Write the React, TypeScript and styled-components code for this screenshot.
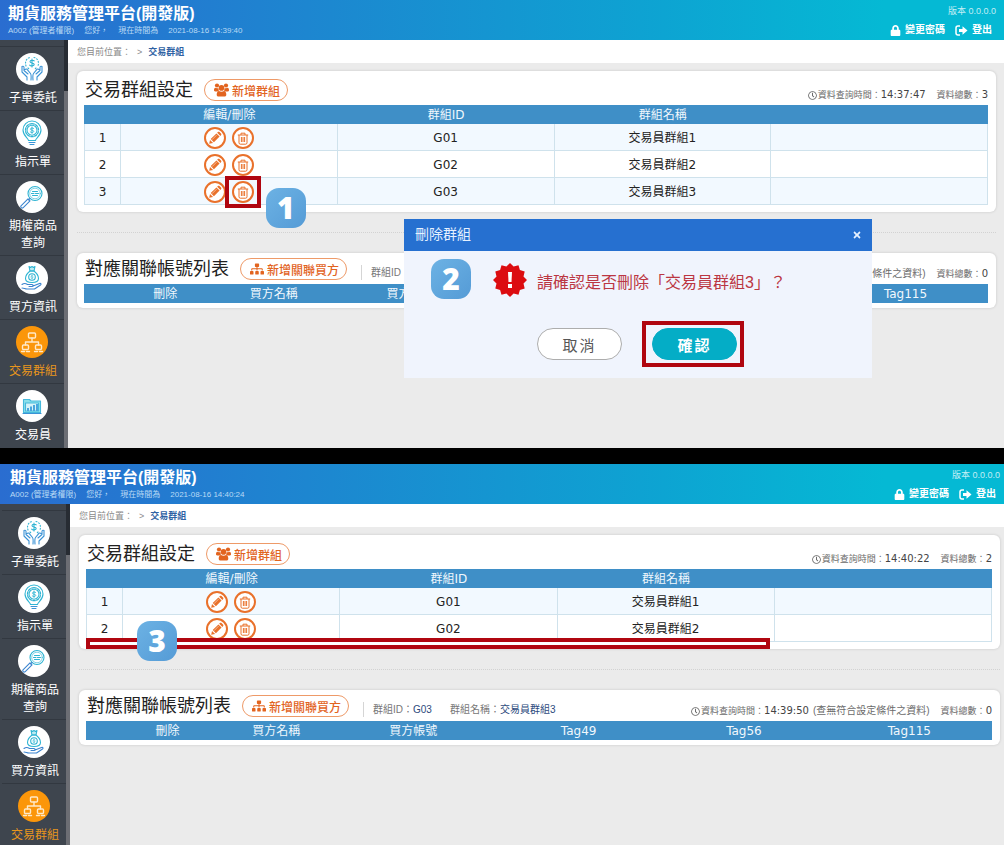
import React from 'react';
import styled, { createGlobalStyle, css } from 'styled-components';
import { FaSitemap, FaLock, FaRegClock, FaTimes } from 'react-icons/fa';

const cjk = '"Noto Sans CJK TC", sans-serif';
const RED = '#b00610';
const ORANGE = '#e9712b';

const GlobalStyle = createGlobalStyle`
  *, *::before, *::after { box-sizing: border-box; }
  body { margin: 0; background: #000; font-family: "Liberation Sans", ${cjk}; }
  button { font-family: inherit; cursor: pointer; padding: 0; }
  h1, h2, h3, p, ul { margin: 0; padding: 0; }
  ul { list-style: none; }
  a { color: inherit; text-decoration: none; }
  svg { display: block; flex: none; }
`;

const Page = styled.div`
  display: flex;
  flex-direction: column;
  gap: 16px;
  min-height: 100vh;
`;

const Screen = styled.section<{ $lead: number; $trail: number; $grow?: boolean }>`
  --lead: ${p => p.$lead}px;
  --trail: ${p => p.$trail}px;
  position: relative;
  display: flex;
  flex-direction: column;
  flex: ${p => (p.$grow ? '1 0 auto' : '0 0 auto')};
  background: #ebebeb;
`;

/* ---------- top bar ---------- */

const TopBar = styled.header`
  display: flex;
  justify-content: space-between;
  height: 40px;
  padding: 4px calc(4px + var(--trail)) 0 calc(8px + var(--lead));
  color: #fff;
  background: linear-gradient(90deg, #2a6dd0 0%, #1c88d0 33%, #0da4d2 66%, #05b9d4 88%, #05b9d4 100%);
`;

const Brand = styled.h1`
  font-size: 16px;
  line-height: 20px;
  font-weight: 700;
`;

const Session = styled.p`
  display: flex;
  gap: 10px;
  font-size: 8px;
  line-height: 14px;
  color: #b9daf5;
  white-space: pre;
`;

const Account = styled.div`
  display: flex;
  flex-direction: column;
  align-items: flex-end;
`;

const Version = styled.span`
  font-size: 9px;
  line-height: 15px;
  color: #c2eef5;
`;

const AccountLinks = styled.nav`
  display: flex;
  gap: 10px;
  padding: 4px 4px 0 0;
`;

const AccountLink = styled.a`
  display: flex;
  align-items: center;
  gap: 4px;
  font-size: 10px;
  line-height: 14px;
  font-weight: 700;
`;

/* ---------- sidebar ---------- */

const Body = styled.div`
  display: flex;
  flex: 1;
`;

const Side = styled.aside`
  display: flex;
  flex: 0 0 calc(68px + var(--lead));
  background: #3e454e;
`;

const Menu = styled.ul<{ $foot: number }>`
  flex: 1;
  padding: 6px 0 ${p => p.$foot}px var(--lead);
`;

const MenuItem = styled.li`
  border-top: 1px solid #323840;
  padding-bottom: 3px;
  &:last-child { padding-bottom: 0; }
`;

const MenuLink = styled.a<{ $active?: boolean }>`
  display: flex;
  flex-direction: column;
  align-items: center;
  gap: 5px;
  padding: 6px 0 0;
  font-size: 12px;
  line-height: 17px;
  text-align: center;
  color: ${p => (p.$active ? '#e8961c' : '#fff')};
`;

const MenuDisc = styled.span<{ $active?: boolean }>`
  display: grid;
  place-items: center;
  width: 32px;
  height: 32px;
  border-radius: 50%;
  background: ${p => (p.$active ? '#fb960a' : '#fff')};
`;

const MenuLabel = styled.span`
  width: 48px;
  margin-left: 2px;
`;

const Rail = styled.div`
  flex: 0 0 4px;
  padding-top: 51px;
  background: #272c33;
`;

const Thumb = styled.div`
  height: 100%;
  background: #6c6e74;
`;

/* ---------- content ---------- */

const Main = styled.main`
  flex: 1;
  min-width: 0;
`;

const Crumbs = styled.nav`
  display: flex;
  align-items: center;
  gap: 6px;
  height: 23px;
  padding-left: 9px;
  font-size: 9px;
  background: #fff;
  color: #8a8a8a;
  a { color: #2f62a3; font-weight: 700; }
`;

const Stack = styled.div`
  padding: 8px calc(4px + var(--trail)) 0 9px;
`;

const Panel = styled.section<{ $tall?: boolean }>`
  position: relative;
  padding: ${p => (p.$tall ? '6px 8px 7px 7px' : '3px 8px 5px 7px')};
  border-radius: 6px;
  background: #fff;
  box-shadow: 0 0 3px rgba(0, 0, 0, 0.16);
`;

const Divider = styled.hr`
  height: 0;
  margin: 20px 0;
  border: 0;
  border-top: 1px dotted #d2d2d2;
`;

const PanelHead = styled.div`
  display: flex;
  align-items: flex-end;
  height: 28px;
  padding: 0 0 4px 1px;
  white-space: nowrap;
`;

const PanelTitle = styled.h2`
  margin-right: 11px;
  font-size: 18px;
  line-height: 22px;
  font-weight: 400;
  color: #222;
`;

const AddButton = styled.button`
  display: flex;
  align-items: center;
  gap: 3px;
  height: 22px;
  padding: 0 7px 0 9px;
  border: 1px solid #ee9a68;
  border-radius: 11px;
  background: #fff;
  color: #e2641f;
  font-size: 12px;
  font-weight: 500;
`;

const GroupInfo = styled.div`
  display: flex;
  gap: 18px;
  margin-left: 14px;
  padding-left: 9px;
  border-left: 1px solid #d5d5d5;
  font-size: 10px;
  line-height: 15px;
  color: #777;
  b { font-weight: 400; color: #2c4a7c; }
`;

const QueryInfo = styled.div<{ $noted?: boolean }>`
  display: flex;
  align-items: center;
  gap: 1px;
  margin: 0 0 -1px auto;
  font-size: 9px;
  line-height: 13px;
  color: #6b6b6b;
  b {
    font: 400 10px/13px "DejaVu Sans", ${cjk};
    color: #444;
  }
`;

const Note = styled.span`
  margin-left: 4px;
  font-size: 10px;
`;

const Total = styled.span`
  margin-left: 10px;
`;

const Table = styled.table`
  width: 100%;
  table-layout: fixed;
  border-collapse: separate;
  border-spacing: 0;
  font: 12px/18px "DejaVu Sans", ${cjk};
  text-align: center;
  th {
    height: 19px;
    padding: 0;
    font-weight: 400;
    color: #f1f8fd;
    background: #3f8fc7;
  }
  td {
    height: 27px;
    padding: 2px 0 0;
    color: #222;
    border: solid #cfe2ec;
    border-width: 0 1px 1px 0;
  }
  td:first-child { border-left-width: 1px; }
  tbody tr:nth-child(odd) td { background: #f2f9ff; }
`;

const Actions = styled.div`
  display: flex;
  justify-content: center;
  gap: 6px;
`;

const RoundButton = styled.button`
  position: relative;
  display: grid;
  place-items: center;
  width: 22px;
  height: 22px;
  border: 2px solid ${ORANGE};
  border-radius: 50%;
  background: #fff;
  color: ${ORANGE};
`;

/* ---------- annotations ---------- */

const frame = css`
  position: absolute;
  border: 4px solid ${RED};
  pointer-events: none;
`;

const Highlight = styled.span<{ $inset: string }>`
  ${frame}
  inset: ${p => p.$inset};
`;

const RemovedRow = styled.span`
  ${frame}
  left: 7px;
  right: 230px;
  bottom: 0;
  height: 11px;
  background: #fff;
`;

const Step = styled.span<{ $x: number; $y: number }>`
  position: absolute;
  left: ${p => p.$x}px;
  top: ${p => p.$y}px;
  z-index: 1;
  width: 40px;
  height: 40px;
  border-radius: 13px;
  background: linear-gradient(135deg, #6cb2e4, #559bd6);
  color: #fff;
  font: 800 30px/39px "Open Sans", sans-serif;
  text-align: center;
`;

/* ---------- dialog ---------- */

const Dialog = styled.div`
  position: absolute;
  left: 404px;
  top: 219px;
  z-index: 2;
  width: 468px;
  background: #f0f4fd;
`;

const DialogHead = styled.div`
  display: flex;
  align-items: center;
  justify-content: space-between;
  height: 32px;
  padding: 0 10px 0 11px;
  background: #2670d0;
  color: #e6f1ff;
  h3 { font-size: 14px; line-height: 20px; font-weight: 400; padding-bottom: 2px; }
`;

const CloseButton = styled.button`
  border: 0;
  background: none;
  color: #e6f1ff;
`;

const Message = styled.div`
  display: flex;
  align-items: center;
  gap: 10px;
  height: 36px;
  margin-top: 11px;
  padding-left: 89px;
  font-size: 16px;
  line-height: 36px;
  color: #bb3642;
  p { padding-top: 6px; }
`;

const DialogActions = styled.div`
  display: flex;
  gap: 30px;
  padding: 30px 0 18px 133px;
`;

const DialogButton = styled.button<{ $primary?: boolean }>`
  position: relative;
  width: 85px;
  height: 32px;
  border: 1px solid ${p => (p.$primary ? '#04adc6' : '#adadad')};
  border-radius: 16px;
  background: ${p => (p.$primary ? '#04adc6' : '#fff')};
  color: ${p => (p.$primary ? '#fff' : '#555')};
  font-size: 15px;
  font-weight: ${p => (p.$primary ? 700 : 400)};
  letter-spacing: 2px;
`;

/* ---------- drawings ---------- */

const Glyph = ({ children, color = '#2fb4d3' }: { children: React.ReactNode; color?: string }) => (
  <svg width="26" height="26" viewBox="0 0 26 26" fill="none" stroke={color} strokeWidth="1.1" strokeLinecap="round" strokeLinejoin="round" aria-hidden="true">
    {children}
  </svg>
);

const Dollar = ({ x, y, s = 1 }: { x: number; y: number; s?: number }) => (
  <path transform={`translate(${x} ${y}) scale(${s})`} d="M2.2-2.2C1.6-3-2-3.2-2-1.3-2 .4 2.2-.4 2.2 1.5 2.2 3.2-1.6 3.2-2.3 2.1M0-4V4" />
);

const HandsGlyph = () => (
  <Glyph>
    <Dollar x={13} y={7} />
    <path strokeDasharray="1 2" d="M7 10C5.500 5 8 2 11 1.500M15 1.500C18 2 20.500 5 19 10M9 12l1 1M17 12l-1 1" />
    <g stroke="#3b93d6">
      <path d="M3 10.500v5.500l5 5v3M3 10.500c1.500-.8 2 .2 2 1v3l4 3.500M6 13.500c1-1 2-.3 2.500.3l3 3.700c.8 1 .8 3 .5 6.500" />
      <path d="M23 10.500v5.500l-5 5v3M23 10.500c-1.500-.8-2 .2-2 1v3l-4 3.500M20 13.500c-1-1-2-.3-2.500.3l-3 3.700c-.8 1-.8 3-.5 6.500" />
    </g>
  </Glyph>
);

const BulbGlyph = () => (
  <Glyph>
    <path d="M9.500 20.500c0-2.500-5.500-4.500-5.500-10.500a9 9 0 0 1 18 0c0 6-5.500 8-5.500 10.500z" />
    <path strokeWidth="1.300" strokeDasharray="2.400 1.400" d="M13 3.700a6.500 6.500 0 1 0 .01 0z" />
    <circle cx="13" cy="10.200" r="5" />
    <Dollar x={13} y={10.200} s={0.8} />
    <path stroke="#3b93d6" d="M10 22.500h6M11 24.500h4" />
  </Glyph>
);

const SearchGlyph = () => (
  <Glyph>
    <circle cx="16" cy="9.500" r="7" />
    <circle cx="16" cy="9.500" r="5.300" strokeWidth=".6" />
    <path d="M13.500 7.500h5M12.500 9.500h2.500M16.500 9.500h3M13.500 11.500h5" />
    <path stroke="#3b84cf" d="M11 14.500l-1.500 1.500M9 14.800l2 2-7 7c-1.500.8-2.800-.5-2-2z" />
  </Glyph>
);

const MoneyBagGlyph = () => (
  <Glyph>
    <path fill="#bdeaf0" d="M10 1.500l1.500 1 1.500-1 1.500 1 1.500-1-1 4.500h-4z" />
    <path d="M11 6c-2.500 2-4.500 4.500-4.500 7.500s3 4 6.500 4 6.500-1 6.500-4S17.500 8 15 6z" />
    <circle cx="13" cy="12" r="3.300" />
    <Dollar x={13} y={12} s={0.5} />
    <path stroke="#3b84cf" d="M3 19.500c2-1.500 4-1 5.500 0h4.500c1.500 0 1.500 2 0 2h-3M14 21l6.500-2.500c1.500-.4 2 .8 1 1.500l-6 4H8c-2 0-3-1-5-1" />
  </Glyph>
);

const OrgGlyph = () => (
  <Glyph color="#ffe9c8">
    <rect x="9.500" y="4" width="7" height="5" rx="1" strokeWidth="1.400" />
    <path strokeWidth="1.400" d="M13 9v4M6.500 16v-3h13v3" />
    <rect x="3.500" y="16" width="6" height="4.500" rx="1" strokeWidth="1.400" />
    <rect x="16.500" y="16" width="6" height="4.500" rx="1" strokeWidth="1.400" />
    <path strokeWidth="1.400" d="M2.500 22.500h3M7.500 22.500h3M15.500 22.500h3M20.500 22.500h3" />
  </Glyph>
);

const ChartFolderGlyph = () => (
  <Glyph color="#46b9dc">
    <path fill="#8be0ea" d="M4.500 19.500V6.500h6l1.500 1.500h9.500v11.500z" />
    <path fill="#d5f3f8" d="M6.500 10h13v8h-13z" />
    <path fill="#4aa6dd" stroke="none" d="M8 18v-3h2v3zM11 18v-4.500h2V18zM14 18v-6h2v6zM17 18v-7h2v7z" />
    <path stroke="#3b93d6" d="M4 20.500h18" />
  </Glyph>
);

const SignOutGlyph = () => (
  <svg width="13" height="11" viewBox="0 0 13 11" fill="none" aria-hidden="true">
    <path d="M5 1H3a2 2 0 0 0-2 2v5a2 2 0 0 0 2 2h2" stroke="#fff" strokeWidth="1.500" />
    <path d="M4 4h3.500V1.300L12.500 5.500 7.500 9.700V7H4z" fill="#fff" />
  </svg>
);

const UsersGlyph = () => (
  <svg width="15" height="14" viewBox="0 0 15 14" fill="currentColor" aria-hidden="true">
    <circle cx="3" cy="2.500" r="2.100" />
    <circle cx="12" cy="2.500" r="2.100" />
    <path d="M1.500 4.800C.4 5 0 5.800 0 7.200 0 8 .5 8.400 1.200 8.400h2.500c.4-.4.900-.7 1.500-.9C4.600 6.700 4.300 5.800 4.300 4.900c-.9.400-1.900.4-2.800-.1zM13.500 4.800c1.100.2 1.500 1 1.500 2.400 0 .8-.5 1.200-1.200 1.200h-2.500c-.4-.4-.9-.7-1.500-.9.600-.8.900-1.700.9-2.600.9.400 1.900.4 2.800-.1z" />
    <circle cx="7.500" cy="4.900" r="2.800" />
    <path d="M5 8.100c1.600 1 3.400 1 5 0 1.600.2 2.300 1.600 2.300 3.700 0 1.100-.7 1.800-1.800 1.800h-6c-1.100 0-1.800-.7-1.800-1.800C2.700 9.700 3.400 8.300 5 8.100z" />
  </svg>
);

const PencilGlyph = () => (
  <svg width="14" height="14" viewBox="0 0 14 14" fill="currentColor" aria-hidden="true">
    <path d="M1.200 12.800l.8-3.900 3.100 3.100zM2.700 8.100l5.700-5.700 3.200 3.200-5.700 5.700zM9.200 1.700l.6-.6c.5-.5 1.200-.5 1.700 0l1.500 1.500c.5.500.5 1.200 0 1.700l-.6.6z" />
    <path d="M4 8.700l4.600-4.600" stroke="#fff" strokeWidth=".5" />
  </svg>
);

const TrashGlyph = () => (
  <svg width="12" height="13" viewBox="0 0 12 13" fill="none" stroke="currentColor" aria-hidden="true">
    <path d="M.8 3h10.400M4 3V1.200h4V3M2 3v7.800c0 .9.500 1.400 1.300 1.400h5.400c.8 0 1.300-.5 1.300-1.400V3M4.400 5v5M6 5v5M7.600 5v5" />
  </svg>
);

const burst = Array.from({ length: 24 }, (_, i) => {
  const r = i % 2 ? 14 : 17;
  const a = (i * Math.PI) / 12;
  return `${(17 + r * Math.sin(a)).toFixed(1)},${(17 - r * Math.cos(a)).toFixed(1)}`;
}).join(' ');

const WarningGlyph = () => (
  <svg width="34" height="34" viewBox="0 0 34 34" aria-hidden="true">
    <polygon points={burst} fill="#dc0c10" />
    <path d="M15 9h4l-.5 10h-3z" fill="#fff" />
    <rect x="15" y="21" width="4" height="4" fill="#fff" />
  </svg>
);

/* ---------- parts ---------- */

const menu = [
  { label: '子單委託', icon: <HandsGlyph /> },
  { label: '指示單', icon: <BulbGlyph /> },
  { label: '期權商品查詢', icon: <SearchGlyph /> },
  { label: '買方資訊', icon: <MoneyBagGlyph /> },
  { label: '交易群組', icon: <OrgGlyph />, active: true },
  { label: '交易員', icon: <ChartFolderGlyph /> },
];

const Query = ({ time, note, total }: { time: string; note?: string; total: number }) => (
  <QueryInfo>
    <FaRegClock size={9} />
    <span>資料查詢時間：<b>{time}</b>{note && <Note>{note}</Note>}</span>
    <Total>資料總數：<b>{total}</b></Total>
  </QueryInfo>
);

type ViewProps = {
  now: string;
  queried: string;
  groups: number;
  items: number;
  lead: number;
  trail: number;
  foot: number;
  grow?: boolean;
  marked?: number;
  removed?: boolean;
  children?: React.ReactNode;
};

const View = ({ now, queried, groups, items, lead, trail, foot, grow, marked, removed, children }: ViewProps) => (
  <Screen $lead={lead} $trail={trail} $grow={grow}>
    <TopBar>
      <div>
        <Brand>期貨服務管理平台(開發版)</Brand>
        <Session>
          <span>A002 (管理者權限)</span>
          <span>您好，</span>
          <span>現在時間為</span>
          <span>{now}</span>
        </Session>
      </div>
      <Account>
        <Version>版本 0.0.0.0</Version>
        <AccountLinks>
          <AccountLink href="#password"><FaLock size={11} />變更密碼</AccountLink>
          <AccountLink href="#logout"><SignOutGlyph />登出</AccountLink>
        </AccountLinks>
      </Account>
    </TopBar>
    <Body>
      <Side>
        <Menu $foot={foot}>
          {menu.slice(0, items).map(m => (
            <MenuItem key={m.label}>
              <MenuLink href="#menu" $active={m.active}>
                <MenuDisc $active={m.active}>{m.icon}</MenuDisc>
                <MenuLabel>{m.label}</MenuLabel>
              </MenuLink>
            </MenuItem>
          ))}
        </Menu>
        <Rail><Thumb /></Rail>
      </Side>
      <Main>
        <Crumbs><span>您目前位置：</span><span>&gt;</span><a href="#groups">交易群組</a></Crumbs>
        <Stack>
          <Panel $tall>
            <PanelHead>
              <PanelTitle>交易群組設定</PanelTitle>
              <AddButton type="button"><UsersGlyph />新增群組</AddButton>
              <Query time={queried} total={groups} />
            </PanelHead>
            <Table>
              <colgroup><col style={{ width: 37 }} /><col /><col /><col /><col /></colgroup>
              <thead>
                <tr><th /><th>編輯/刪除</th><th>群組ID</th><th>群組名稱</th><th /></tr>
              </thead>
              <tbody>
                {Array.from({ length: groups }, (_, i) => i + 1).map(n => (
                  <tr key={n}>
                    <td>{n}</td>
                    <td>
                      <Actions>
                        <RoundButton type="button" aria-label="編輯"><PencilGlyph /></RoundButton>
                        <RoundButton type="button" aria-label="刪除">
                          <TrashGlyph />
                          {marked === n && <><Highlight $inset="-7px -9px" /><Step $x={32} $y={5}>1</Step></>}
                        </RoundButton>
                      </Actions>
                    </td>
                    <td>G0{n}</td>
                    <td>交易員群組{n}</td>
                    <td />
                  </tr>
                ))}
              </tbody>
            </Table>
            {removed && <><RemovedRow /><Step $x={58} $y={86}>3</Step></>}
          </Panel>
          <Divider />
          <Panel>
            <PanelHead>
              <PanelTitle>對應關聯帳號列表</PanelTitle>
              <AddButton type="button"><FaSitemap size={14} />新增關聯買方</AddButton>
              <GroupInfo>
                <span>群組ID：<b>G03</b></span>
                <span>群組名稱：<b>交易員群組3</b></span>
              </GroupInfo>
              <Query time="14:39:50" note="(查無符合設定條件之資料)" total={0} />
            </PanelHead>
            <Table>
              <colgroup>
                <col style={{ width: '3%' }} /><col style={{ width: '12%' }} /><col style={{ width: '12%' }} />
                <col /><col /><col /><col />
              </colgroup>
              <thead>
                <tr><th /><th>刪除</th><th>買方名稱</th><th>買方帳號</th><th>Tag49</th><th>Tag56</th><th>Tag115</th></tr>
              </thead>
            </Table>
          </Panel>
        </Stack>
      </Main>
    </Body>
    {children}
  </Screen>
);

export default function App() {
  return (
    <>
      <GlobalStyle />
      <Page>
        <View now="2021-08-16 14:39:40" queried="14:37:47" groups={3} items={6} lead={0} trail={4} foot={4} marked={3}>
          <Dialog role="dialog" aria-label="刪除群組">
            <DialogHead>
              <h3>刪除群組</h3>
              <CloseButton type="button" aria-label="關閉"><FaTimes size={10} /></CloseButton>
            </DialogHead>
            <Message>
              <WarningGlyph />
              <p>請確認是否刪除「交易員群組3」？</p>
            </Message>
            <DialogActions>
              <DialogButton type="button">取消</DialogButton>
              <DialogButton type="button" $primary>確認<Highlight $inset="-8px -8px -8px -11px" /></DialogButton>
            </DialogActions>
            <Step $x={27} $y={40}>2</Step>
          </Dialog>
        </View>
        <View now="2021-08-16 14:40:24" queried="14:40:22" groups={2} items={5} lead={2} trail={0} foot={0} grow removed />
      </Page>
    </>
  );
}
